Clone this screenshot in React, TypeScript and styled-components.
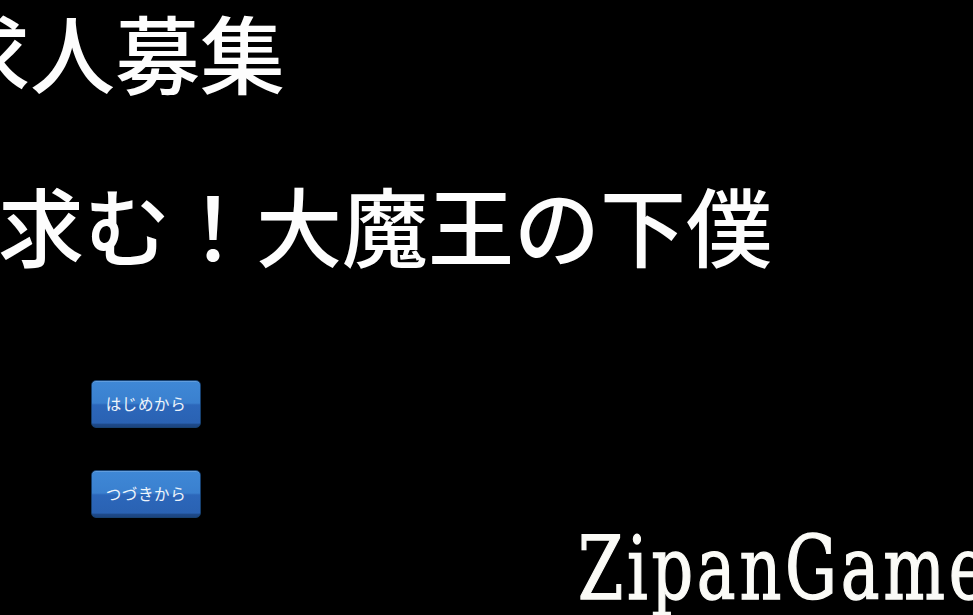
import styled, { createGlobalStyle } from "styled-components";

const GlobalStyle = createGlobalStyle`
  html, body {
    margin: 0;
    padding: 0;
    background: #000;
    overflow: hidden;
  }
`;

const Screen = styled.main`
  width: 973px;
  height: 615px;
  overflow: hidden;
  background: #000;
  color: #fff;
  display: flex;
  flex-direction: column;
`;

const Title = styled.h1<{ $indent: number; $top: number; $size: number }>`
  margin: ${(p) => p.$top}px 0 0 ${(p) => p.$indent}px;
  font-family: "Noto Sans CJK JP", "Noto Sans", sans-serif;
  font-weight: 500;
  font-size: ${(p) => p.$size}px;
  line-height: ${(p) => p.$size}px;
  white-space: nowrap;
  color: #fdfdfd;
`;

const Menu = styled.nav`
  margin: 113px 0 0 91px;
  display: flex;
  flex-direction: column;
  gap: 42px;
`;

const MenuButton = styled.button`
  width: 110px;
  height: 48px;
  padding: 0 0 3px;
  border: 1px solid #17406f;
  border-radius: 5px;
  background: linear-gradient(
    to bottom,
    #3f88d6 0%,
    #3a80cf 48%,
    #2c67ba 52%,
    #2a62b3 92%,
    #1f4b8c 93%,
    #1b447f 100%
  );
  color: #eef4fb;
  font-family: "Noto Sans CJK JP", "Noto Sans", sans-serif;
  font-size: 15.5px;
  letter-spacing: 0.6px;
  cursor: pointer;
  box-shadow: inset 0 1px 0 rgba(255, 255, 255, 0.18);
`;

const Brand = styled.div`
  margin: 7px 0 0 578px;
  font-family: "DejaVu Serif", "Liberation Serif", serif;
  font-size: 88px;
  line-height: 88px;
  letter-spacing: 5px;
  white-space: nowrap;
  color: #fbfbf7;
  -webkit-text-stroke: 1.4px #fbfbf7;
  transform: scaleX(0.74);
  transform-origin: left center;
`;

export default function App() {
  return (
    <>
      <GlobalStyle />
      <Screen>
        <Title $indent={-55} $top={8} $size={85}>
          求人募集
        </Title>
        <Title $indent={-2} $top={88} $size={86}>
          求む！大魔王の下僕
        </Title>
        <Menu>
          <MenuButton>はじめから</MenuButton>
          <MenuButton>つづきから</MenuButton>
        </Menu>
        <Brand>ZipanGame</Brand>
      </Screen>
    </>
  );
}
